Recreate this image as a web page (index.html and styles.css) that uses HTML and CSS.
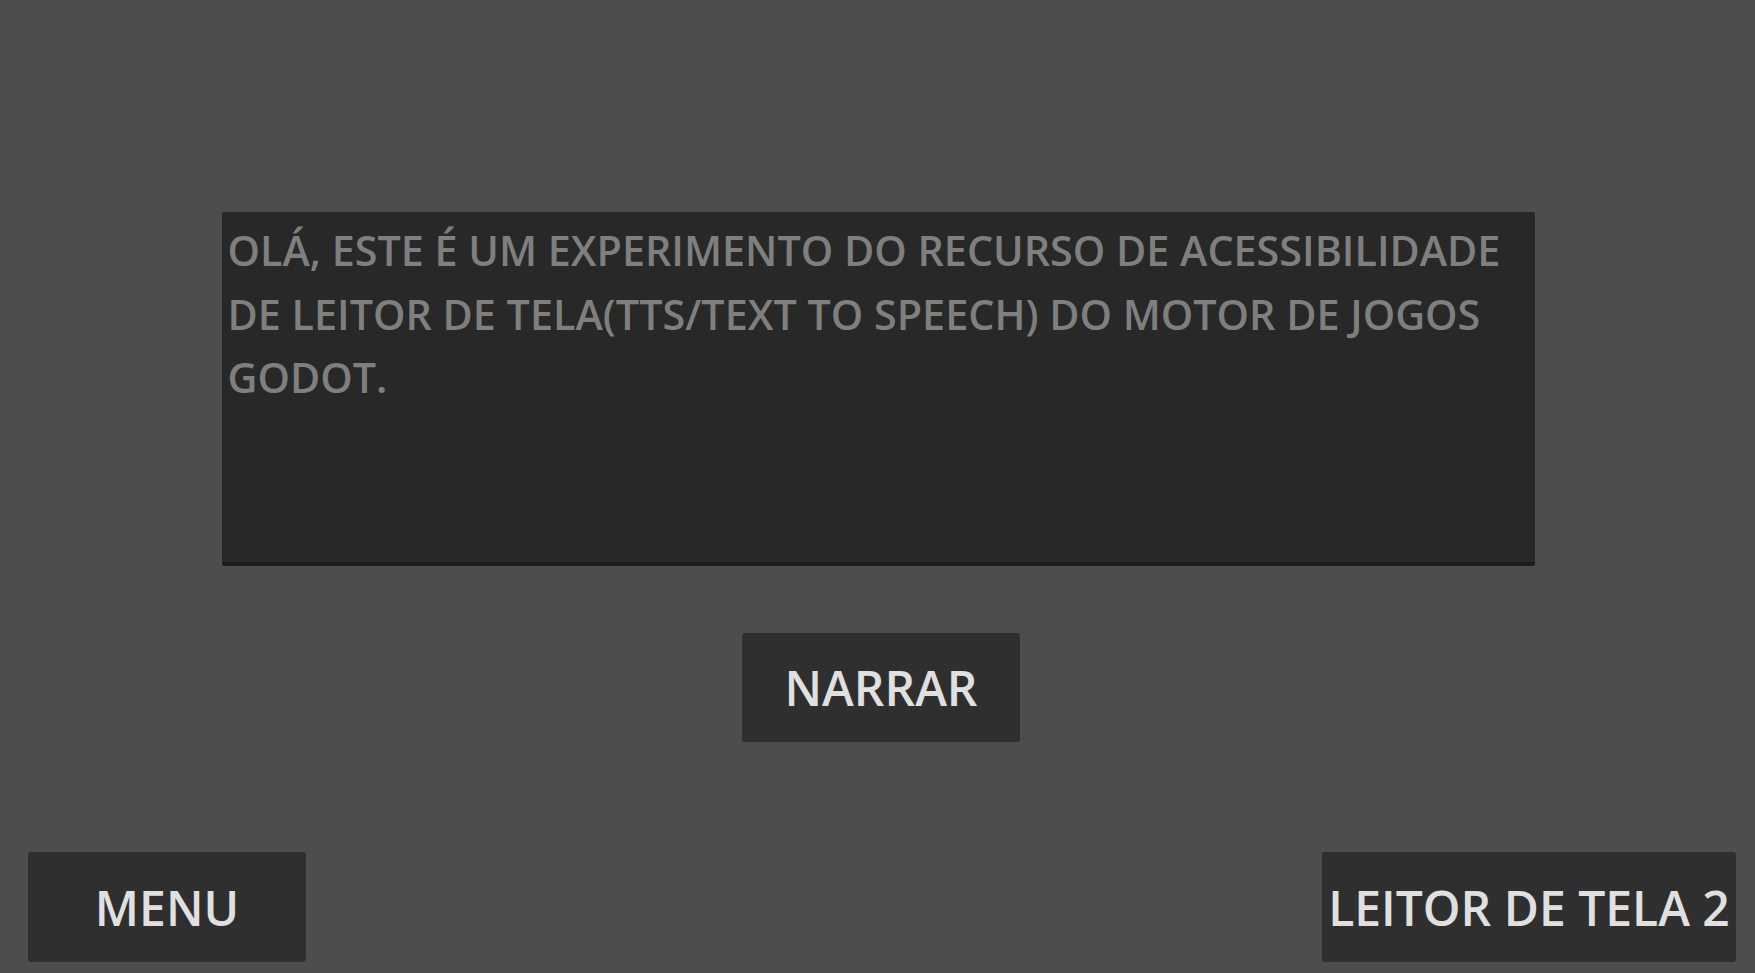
FILE: index.html
```html
<!DOCTYPE html>
<html lang="pt-BR">
<head>
    <meta charset="UTF-8">
    <meta name="viewport" content="width=device-width, initial-scale=1.0">
    <title>Leitor de Tela</title>
    <link rel="stylesheet" href="styles.css">
</head>
<body>
    <main class="screen">
        <section class="reader">
            <div class="text-box" id="tts-text">OLÁ, ESTE É UM EXPERIMENTO DO RECURSO DE ACESSIBILIDADE DE LEITOR DE TELA(TTS/TEXT TO SPEECH) DO MOTOR DE JOGOS GODOT.</div>
            <button class="btn btn-narrar" type="button">NARRAR</button>
        </section>

        <footer class="bottom-bar">
            <button class="btn btn-menu" type="button">MENU</button>
            <button class="btn btn-next" type="button">LEITOR DE TELA 2</button>
        </footer>
    </main>
</body>
</html>
```

FILE: styles.css
```css
/* General */
body {
    margin: 0;
    padding: 0;
    background-color: #4d4d4d;
    font-family: "Open Sans", "Noto Sans", sans-serif;
    font-weight: 600;
}

.screen {
    height: 973px;
    display: flex;
    flex-direction: column;
}

/* Text area + narrate button */
.reader {
    padding-top: 212px;
    display: flex;
    flex-direction: column;
    align-items: center;
}

.text-box {
    box-sizing: border-box;
    width: 1313px;
    height: 354px;
    padding: 7px 4px 0 6px;
    margin-left: 1px;
    background-color: #282828;
    border-bottom: 4px solid #1c1c1c;
    border-radius: 2px;
    color: #7f7f7f;
    font-size: 41.3px;
    line-height: 63.5px;
}

.btn {
    background-color: #2f2f2f;
    color: #e0e0e0;
    border: none;
    border-radius: 3px;
    font-family: "Open Sans", "Noto Sans", sans-serif;
    font-weight: 600;
    font-size: 48px;
    height: 110px;
    padding: 0;
    cursor: pointer;
}

.btn-narrar {
    width: 278px;
    height: 109px;
    margin-top: 67px;
    margin-left: 7px;
}

/* Bottom row */
.bottom-bar {
    margin-top: auto;
    display: flex;
    justify-content: space-between;
    padding: 0 19px 11px 28px;
}

.btn-menu {
    width: 278px;
}

.btn-next {
    width: 414px;
}
```
